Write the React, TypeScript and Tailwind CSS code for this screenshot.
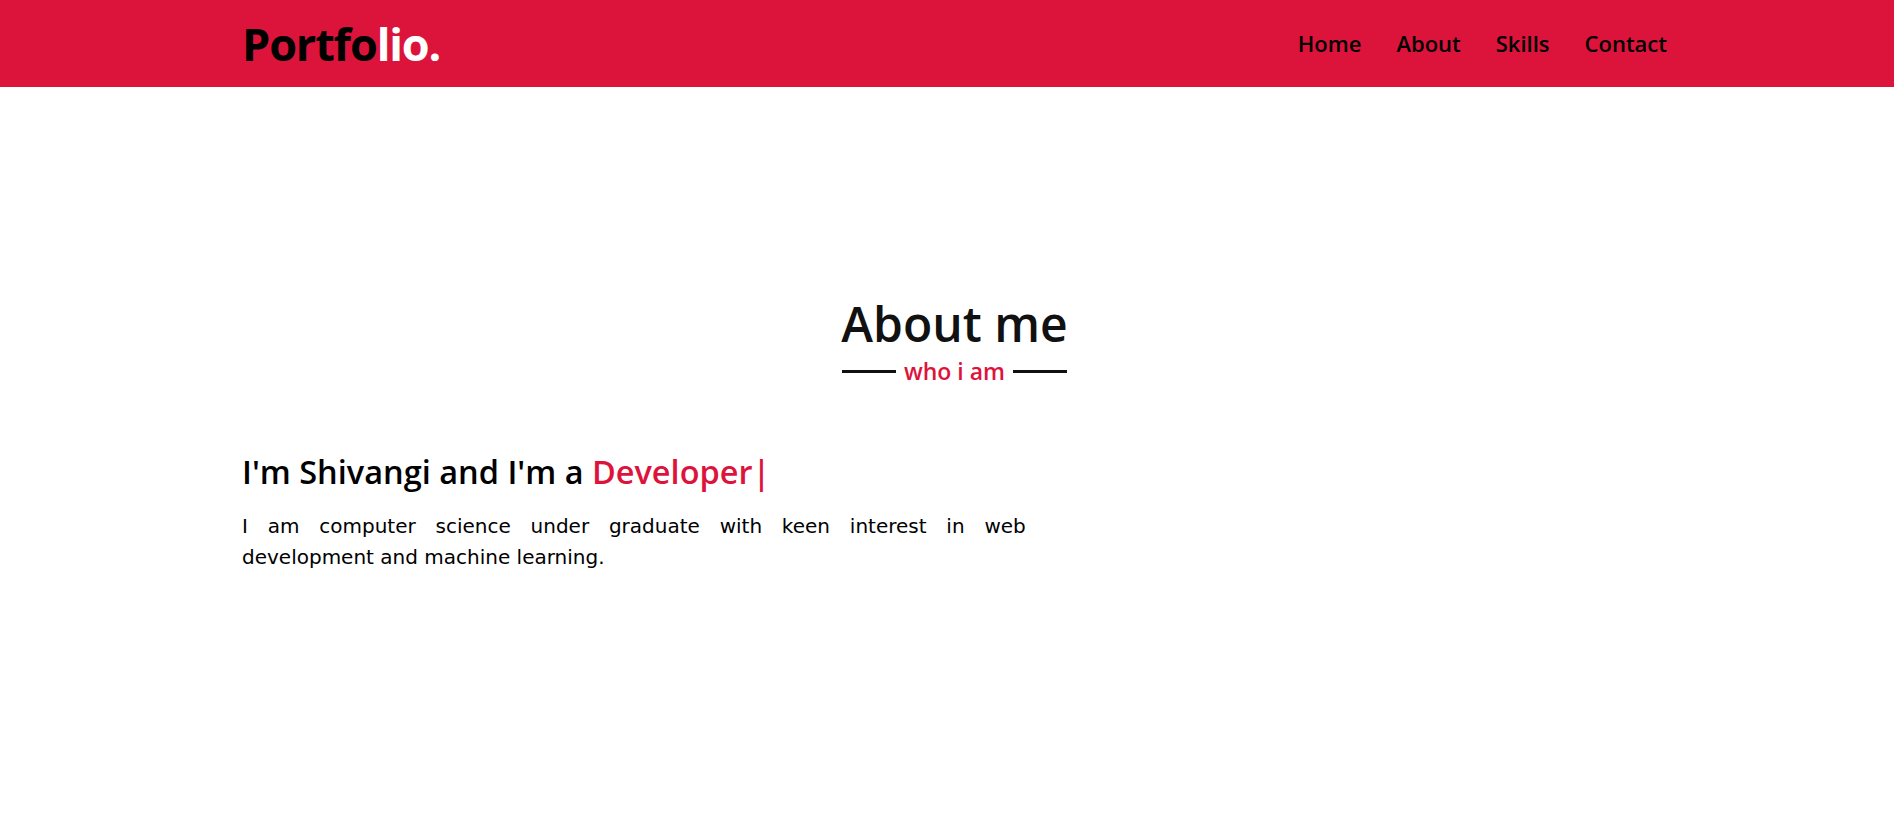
export default function App() {
  return (
    <div className="min-h-screen bg-white">
      {/* navbar */}
      <header className="h-[87px] bg-[#dc143c]">
        <div className="ml-[242px] flex h-full w-[1425px] items-center justify-between">
          <a className="text-[45px] font-bold tracking-tight text-black" style={{ fontFamily: '"Open Sans", sans-serif' }}>
            Portfo<span className="text-white">lio.</span>
          </a>
          <nav className="flex gap-[35px] text-[22px] font-semibold text-black" style={{ fontFamily: '"Open Sans", sans-serif' }}>
            <a>Home</a>
            <a>About</a>
            <a>Skills</a>
            <a>Contact</a>
          </nav>
        </div>
      </header>

      {/* about */}
      <section className="ml-[242px] w-[1425px] pt-[207px]">
        <div className="flex flex-col items-center" style={{ fontFamily: '"Open Sans", sans-serif' }}>
          <h2 className="text-[48px] font-semibold leading-[60px] text-[#111]">About me</h2>
          <div className="mt-1 flex items-center gap-[8px]">
            <span className="h-[3px] w-[54px] bg-[#111]"></span>
            <span className="text-[23px] font-semibold leading-[26px] text-[#dc143c]">who i am</span>
            <span className="h-[3px] w-[54px] bg-[#111]"></span>
          </div>
        </div>

        <div className="mt-[68px] w-[55%]">
          <h3 className="text-[32.5px] font-semibold leading-[40px] text-black" style={{ fontFamily: '"Open Sans", sans-serif' }}>
            I'm Shivangi and I'm a <span className="text-[#dc143c]">Developer|</span>
          </h3>
          <p className="mt-[19px] text-justify text-[20px] leading-[31px] text-black" style={{ fontFamily: '"DejaVu Sans", sans-serif' }}>
            I am computer science under graduate with keen interest in web development and machine learning.
          </p>
        </div>
      </section>
    </div>
  )
}
